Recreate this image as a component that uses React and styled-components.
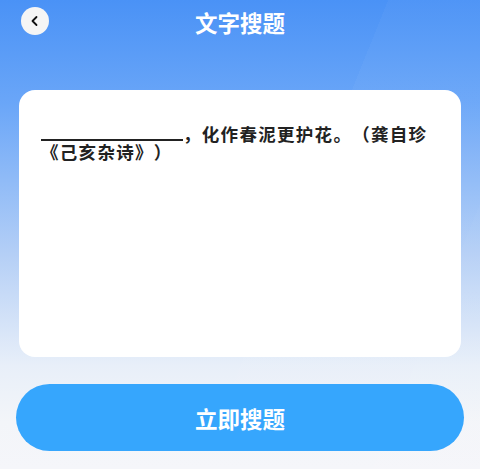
import React, { useState } from 'react';
import styled, { createGlobalStyle } from 'styled-components';

const GlobalStyle = createGlobalStyle`
  html, body {
    margin: 0;
    padding: 0;
  }
  body {
    font-family: "Noto Sans CJK SC", "Noto Sans", sans-serif;
    background: #f4f6fa;
  }
`;

const Page = styled.div`
  width: 480px;
  height: 469px;
  overflow: hidden;
  display: flex;
  flex-direction: column;
  background:
    linear-gradient(112deg, rgba(255, 255, 255, 0) 58%, rgba(255, 255, 255, 0.03) 58%, rgba(255, 255, 255, 0.03) 84%, rgba(255, 255, 255, 0.05) 84%),
    linear-gradient(180deg, #4a92f6 0%, #6aa6f8 22%, #b6d0f6 55%, #e8eff9 78%, #f3f5f9 90%, #f5f6fa 100%);
`;

const Header = styled.div`
  height: 44px;
  display: flex;
  align-items: center;
  justify-content: center;
  position: relative;
  flex-shrink: 0;
`;

const BackButton = styled.button`
  position: absolute;
  left: 21px;
  top: 7px;
  width: 28px;
  height: 28px;
  border-radius: 50%;
  border: none;
  background: #f5f5f5;
  display: flex;
  align-items: center;
  justify-content: center;
  padding: 0;
  cursor: pointer;
`;

const Title = styled.h1`
  margin: 0;
  margin-top: -1px;
  color: #fff;
  font-size: 22.5px;
  font-weight: 700;
`;

const Card = styled.div`
  margin: 46px 19px 0;
  height: 267px;
  background: #fff;
  border-radius: 16px;
  padding: 35px 22px 0;
  box-sizing: border-box;
  flex-shrink: 0;
`;

const Question = styled.p`
  margin: 0;
  font-size: 17.5px;
  font-weight: 700;
  line-height: 18px;
  letter-spacing: 1.3px;
  text-spacing-trim: space-all;
  color: #222;
`;

const Blank = styled.span`
  display: inline-block;
  width: 142px;
  height: 14px;
  border-bottom: 2px solid #222;
`;

const Footer = styled.div`
  padding: 27px 16px 0;
`;

const SearchButton = styled.button`
  width: 100%;
  height: 67px;
  border: none;
  border-radius: 34px;
  background: #36a6fd;
  color: #fff;
  font-family: inherit;
  font-size: 22.5px;
  font-weight: 700;
  cursor: pointer;
`;

const BackIcon = () => (
  <svg width="12" height="12" viewBox="0 0 12 12" fill="none">
    <path d="M7.5 2 L3.5 6 L7.5 10" stroke="#111" strokeWidth="1.8" strokeLinecap="round" strokeLinejoin="round" />
  </svg>
);

export default function App() {
  const [question] = useState({
    rest: '，化作春泥更护花。（龚自珍《己亥杂诗》）',
  });

  return (
    <>
      <GlobalStyle />
      <Page>
        <Header>
          <BackButton aria-label="返回">
            <BackIcon />
          </BackButton>
          <Title>文字搜题</Title>
        </Header>
        <Card>
          <Question>
            <Blank />
            {question.rest}
          </Question>
        </Card>
        <Footer>
          <SearchButton>立即搜题</SearchButton>
        </Footer>
      </Page>
    </>
  );
}
